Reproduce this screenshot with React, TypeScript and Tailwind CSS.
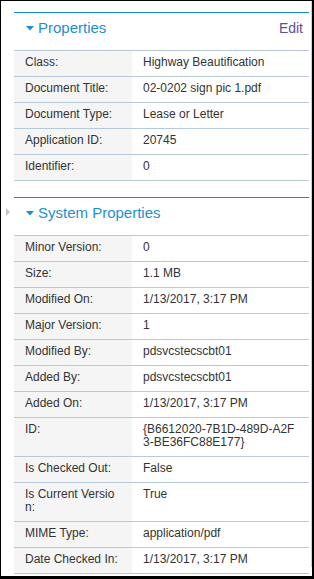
import React from "react";

type Row = { label: string; value: string };

const props1: Row[] = [
  { label: "Class:", value: "Highway Beautification" },
  { label: "Document Title:", value: "02-0202 sign pic 1.pdf" },
  { label: "Document Type:", value: "Lease or Letter" },
  { label: "Application ID:", value: "20745" },
  { label: "Identifier:", value: "0" },
];

const props2: Row[] = [
  { label: "Minor Version:", value: "0" },
  { label: "Size:", value: "1.1 MB" },
  { label: "Modified On:", value: "1/13/2017, 3:17 PM" },
  { label: "Major Version:", value: "1" },
  { label: "Modified By:", value: "pdsvcstecscbt01" },
  { label: "Added By:", value: "pdsvcstecscbt01" },
  { label: "Added On:", value: "1/13/2017, 3:17 PM" },
  { label: "ID:", value: "{B6612020-7B1D-489D-A2F3-BE36FC88E177}" },
  { label: "Is Checked Out:", value: "False" },
  { label: "Is Current Version:", value: "True" },
  { label: "MIME Type:", value: "application/pdf" },
  { label: "Date Checked In:", value: "1/13/2017, 3:17 PM" },
];

function DownTri() {
  return (
    <svg width="8" height="5" viewBox="0 0 8 5" className="shrink-0">
      <polygon points="0,0 8,0 4,4.5" fill="#1d8fd0" />
    </svg>
  );
}

function Table({ rows }: { rows: Row[] }) {
  return (
    <div className="border-t border-[#b7c9dc]">
      {rows.map((r) => (
        <div key={r.label} className="flex border-b border-[#b7c9dc] text-[12px] leading-[13px] text-[#333]">
          <div className="w-[118px] shrink-0 bg-[#f5f5f5] pl-[11px] pr-[12px] pt-[5px] pb-[7px] break-all">
            {r.label}
          </div>
          <div className="flex-1 min-w-0 pl-[11px] pr-[12px] pt-[5px] pb-[7px] break-all">{r.value}</div>
        </div>
      ))}
    </div>
  );
}

function Header({ title, edit, handle }: { title: string; edit?: boolean; handle?: boolean }) {
  return (
    <div className="relative border-t border-[#1788c6] flex items-center pl-[12px] pr-[6px] pt-[5px] pb-[12px]">
      {handle && (
        <svg width="4" height="8" viewBox="0 0 4 8" className="absolute left-[-8px] top-[10px]">
          <polygon points="0,0 4,4 0,8" fill="#c4c4c4" />
        </svg>
      )}
      <DownTri />
      <span className="ml-[4px] text-[15px] leading-[20px] text-[#1d8fd0]">{title}</span>
      {edit && <span className="ml-auto text-[14px] leading-[20px] text-[#5e4f96]">Edit</span>}
    </div>
  );
}

export default function App() {
  return (
    <div
      className="w-[314px] h-[579px] overflow-hidden bg-white border-l border-t border-r-2 border-b-[3px] border-black flex"
      style={{ fontFamily: '"Liberation Sans", Arial, sans-serif' }}
    >
      <div className="flex-1 pl-[13px] pt-[11px]">
        <Header title="Properties" edit />
        <Table rows={props1} />
        <div className="mt-[16px]">
          <Header title="System Properties" handle />
          <Table rows={props2} />
        </div>
      </div>
      <div className="w-[3px] shrink-0 flex justify-end">
        <div className="w-[1px] h-[566px] bg-[#d0d0d0]" />
      </div>
    </div>
  );
}
